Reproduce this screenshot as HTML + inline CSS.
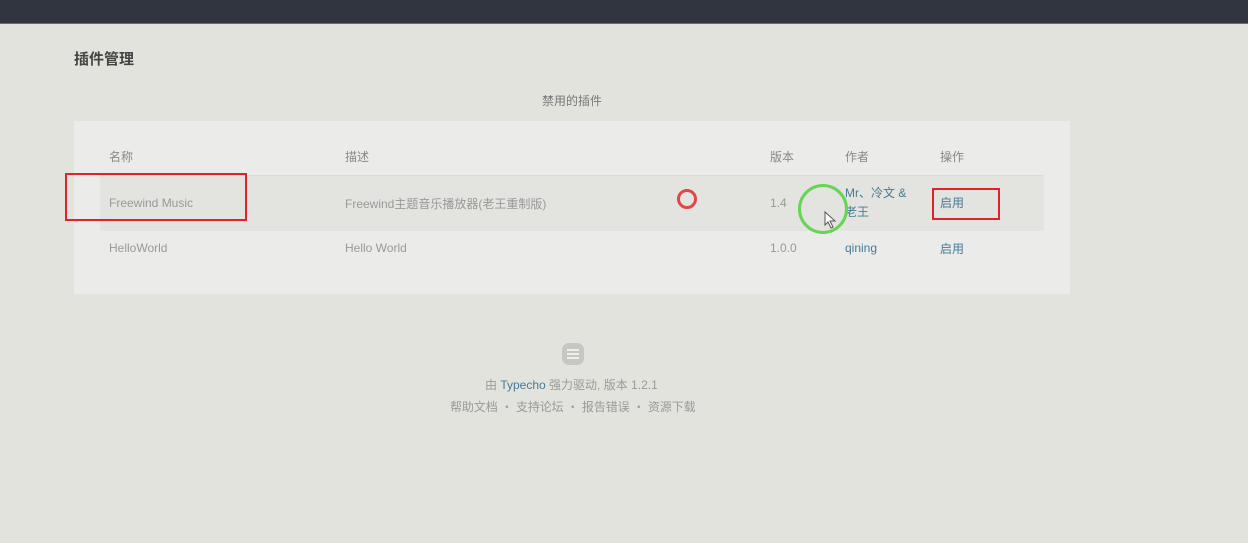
<!DOCTYPE html>
<html><head><meta charset="utf-8"><style>
body{margin:0;width:1248px;height:543px;background:#e3e3de;font-family:"Liberation Sans","Noto Sans CJK SC",sans-serif;position:relative;overflow:hidden;font-size:12px;color:#999}
.top{position:absolute;left:0;top:0;width:1248px;height:23px;background:#30353f;border-bottom:1px solid #6a6d70}
.a{position:absolute;white-space:nowrap}
.panel{position:absolute;left:74px;top:121px;width:996px;height:173px;background:#ebebe9}
.row{position:absolute;left:100px;top:176px;width:944px;height:55px;background:#e3e3df}
.hdr{position:absolute;left:100px;top:175px;width:944px;height:1px;background:#dcdcd8}
.link{color:#467b96}
.box{position:absolute;border:2px solid #e0222a}
</style></head><body>
<div class="top"></div>
<div class="a" style="left:74px;top:48px;font-size:15px;font-weight:bold;color:#444">插件管理</div>
<div class="a" style="left:542px;top:92px;color:#777">禁用的插件</div>
<div class="panel"></div>
<div class="row"></div><div class="hdr"></div>
<div class="a" style="left:109px;top:148px;color:#888">名称</div>
<div class="a" style="left:345px;top:148px;color:#888">描述</div>
<div class="a" style="left:770px;top:148px;color:#888">版本</div>
<div class="a" style="left:845px;top:148px;color:#888">作者</div>
<div class="a" style="left:940px;top:148px;color:#888">操作</div>
<div class="a" style="left:109px;top:196px">Freewind Music</div>
<div class="a" style="left:345px;top:195px">Freewind主题音乐播放器(老王重制版)</div>
<div class="a" style="left:770px;top:196px">1.4</div>
<div class="a link" style="left:845px;top:184px;line-height:19px">Mr、冷文 &amp;<br>老王</div>
<div class="a link" style="left:940px;top:194px">启用</div>
<div class="a" style="left:109px;top:241px">HelloWorld</div>
<div class="a" style="left:345px;top:241px">Hello World</div>
<div class="a" style="left:770px;top:241px">1.0.0</div>
<div class="a link" style="left:845px;top:241px">qining</div>
<div class="a link" style="left:940px;top:240px">启用</div>
<div class="box" style="left:65px;top:173px;width:178px;height:44px"></div>
<div class="box" style="left:932px;top:188px;width:64px;height:28px"></div>
<div class="a" style="left:677px;top:189px;width:14px;height:14px;border:3px solid #e04848;border-radius:50%"></div>
<div class="a" style="left:798px;top:184px;width:50px;height:50px;border:3px solid #66d455;border-radius:50%;box-sizing:border-box"></div>
<svg class="a" style="left:824px;top:211px" width="14" height="18" viewBox="0 0 14 18"><path d="M1 1 L1 14 L4 11 L7 17 L9 16 L6 10 L11 10 Z" fill="#fff" stroke="#555" stroke-width="1"/></svg>
<div class="a" style="left:562px;top:343px;width:22px;height:22px;border-radius:7px;background:#c6c6c2"></div>
<div class="a" style="left:567px;top:349px;width:12px;height:2px;background:#eee;box-shadow:0 4px 0 #eee,0 8px 0 #eee"></div>
<div class="a" style="left:485px;top:376px">由 <span class="link">Typecho</span> 强力驱动, 版本 1.2.1</div>
<div class="a" style="left:450px;top:398px;letter-spacing:-0.1px">帮助文档 ・ 支持论坛 ・ 报告错误 ・ 资源下载</div>
</body></html>
